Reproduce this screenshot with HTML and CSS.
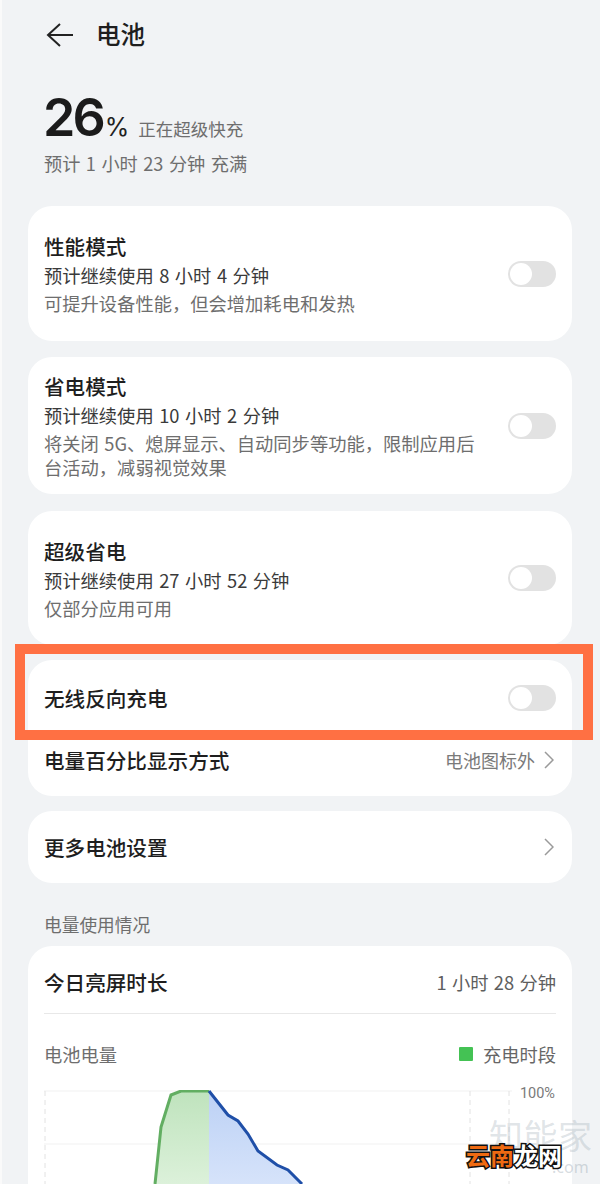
FILE: index.html
```html
<!DOCTYPE html>
<html lang="zh">
<head>
<meta charset="utf-8">
<title>电池</title>
<link rel="stylesheet" href="styles.css">
</head>
<body>
<div class="page">
  <header class="topbar">
    <svg class="back" width="28" height="26" viewBox="0 0 28 26"><path d="M14 2 L2 13 L14 24 M2 13 H27" fill="none" stroke="#222" stroke-width="2"/></svg>
    <h1 class="title">电池</h1>
  </header>
  <section class="status">
    <div class="level"><span class="num">26</span><span class="pct">%</span><span class="state">正在超级快充</span></div>
    <div class="eta">预计 1 小时 23 分钟 充满</div>
  </section>

  <div class="card card-a">
    <div class="texts"><div class="name">性能模式</div><div class="line dark">预计继续使用 8 小时 4 分钟</div><div class="line">可提升设备性能，但会增加耗电和发热</div></div>
    <span class="switch"></span>
  </div>
  <div class="card card-b">
    <div class="texts"><div class="name">省电模式</div><div class="line dark">预计继续使用 10 小时 2 分钟</div><div class="line">将关闭 5G、熄屏显示、自动同步等功能，限制应用后台活动，减弱视觉效果</div></div>
    <span class="switch"></span>
  </div>
  <div class="card card-c">
    <div class="texts"><div class="name">超级省电</div><div class="line dark">预计继续使用 27 小时 52 分钟</div><div class="line">仅部分应用可用</div></div>
    <span class="switch"></span>
  </div>
  <div class="card card-d">
    <div class="row row-wireless"><span class="name">无线反向充电</span><span class="switch"></span></div>
    <div class="row row-percent"><span class="name">电量百分比显示方式</span><span class="value">电池图标外<svg class="chev" width="10" height="18" viewBox="0 0 10 18"><path d="M1 1 L9 9 L1 17" fill="none" stroke="#9a9a9a" stroke-width="1.5"/></svg></span></div>
  </div>
  <div class="card card-e">
    <div class="row"><span class="name">更多电池设置</span><svg class="chev" width="10" height="18" viewBox="0 0 10 18"><path d="M1 1 L9 9 L1 17" fill="none" stroke="#9a9a9a" stroke-width="1.5"/></svg></div>
  </div>
  <div class="section-label">电量使用情况</div>
  <div class="card card-f">
    <div class="today"><span class="name">今日亮屏时长</span><span class="today-val">1 小时 28 分钟</span></div>
    <div class="chart-head"><span class="chart-title">电池电量</span><span class="legend"><i class="dot"></i>充电时段</span></div>
    <svg class="chart" width="544" height="100" viewBox="0 0 544 100">
      <defs>
        <linearGradient id="g" x1="0" y1="0" x2="0" y2="1"><stop offset="0" stop-color="#bfe3bd"/><stop offset="1" stop-color="#dcf1da"/></linearGradient>
        <linearGradient id="b" x1="0" y1="0" x2="0" y2="1"><stop offset="0" stop-color="#bcd1f5"/><stop offset="1" stop-color="#d6e3fa"/></linearGradient>
      </defs>
      <path d="M16 1 H484 M16 54 H484" stroke="#f1f1f1" stroke-width="1"/>
      <path d="M17 1 V100 M442 1 V100 M481 1 V100" stroke="#e2e2e2" stroke-width="1" stroke-dasharray="5 4"/>
      <path d="M127 94 L133 37 L143 5 L153 1 H181 V94 Z" fill="url(#g)"/>
      <path d="M181 1 L200 25 L210 31 L220 44 L230 61 L249 75 L260 80 L274 94 H181 Z" fill="url(#b)"/>
      <path d="M127 94 L133 37 L143 5 L153 1 H181" fill="none" stroke="#62ae62" stroke-width="3"/>
      <path d="M181 1 L200 25 L210 31 L220 44 L230 61 L249 75 L260 80 L274 94" fill="none" stroke="#1f4fa8" stroke-width="3"/>
    </svg>
    <span class="tick">100%</span>
  </div>
  <div class="frame"></div>
  <div class="mark">知能家</div>
  <div class="mark-com">.com</div>
  <div class="stamp"><span class="orange">云南</span><span class="white">龙网</span></div>
</div>
</body>
</html>
```
FILE: styles.css
```css
* { box-sizing: border-box; }
html, body { margin: 0; padding: 0; }
body { width: 600px; height: 1184px; overflow: hidden; background: #f1f3f5; font-family: "Noto Sans CJK SC", "Noto Sans", sans-serif; color: #1e1e1e; }
.page { position: relative; width: 600px; height: 1184px; overflow: hidden; padding: 0 28px 0 26px; border-left: 2px solid #fafafa; }
.topbar { display: flex; align-items: center; height: 70px; padding-left: 18px; gap: 22px; }
.back { display: block; }
.title { margin: 0; font-size: 24.5px; font-weight: 500; line-height: 30px; position: relative; top: -1px; }
.status { padding: 19px 0 0 16px; height: 136px; }
.level { display: flex; align-items: baseline; height: 57px; margin-left: -1px; }
.num { font-family: Inter, "Noto Sans", sans-serif; font-size: 52px; line-height: 57px; font-weight: 600; letter-spacing: -3px; color: #1b1b1b; }
.pct { font-family: Inter, "Noto Sans", sans-serif; font-size: 25px; font-weight: 400; margin-left: 2px; color: #222; }
.state { font-size: 17.5px; color: #6e6e6e; margin-left: 9px; }
.eta { font-size: 18.2px; word-spacing: 1.4px; line-height: 26px; color: #6e6e6e; margin-top: 4px; }
.card { display: flex; align-items: center; justify-content: space-between; background: #fff; border-radius: 24px; padding: 0 16px; margin-bottom: 16px; }
.card-a { height: 135px; }
.card-b { height: 137px; margin-bottom: 17px; }
.card-c { height: 134px; margin-bottom: 15px; }
.card-d { height: 136px; flex-direction: column; align-items: stretch; justify-content: flex-start; margin-bottom: 15px; }
.card-e { height: 72px; }
.card-f { position: relative; display: block; height: 300px; padding: 0; margin: 0; }
.texts { width: 440px; }
.name { font-size: 20.6px; line-height: 28px; font-weight: 500; color: #1e1e1e; }
.line { font-size: 18.3px; word-spacing: 1.4px; line-height: 24px; color: #6e6e6e; margin-top: 4px; }
.line.dark { color: #3a3a3a; margin-top: 3px; }
.switch { position: relative; flex: none; display: block; width: 48px; height: 26px; border-radius: 13px; background: #e2e2e2; }
.switch::after { content: ""; position: absolute; left: 2px; top: 2px; width: 22px; height: 22px; border-radius: 50%; background: #fff; }
.row { display: flex; align-items: center; justify-content: space-between; width: 100%; }
.row-wireless { height: 76px; }
.row-percent { height: 48px; }
.row .chev { margin-right: 2px; }
.value { display: flex; align-items: center; gap: 9px; font-size: 18px; color: #7a7a7a; }
.value .chev { margin-right: 2px; }
.section-label { font-size: 17.7px; line-height: 24px; color: #6e6e6e; padding-left: 16px; margin-top: 29px; margin-bottom: 10px; }
.today { display: flex; align-items: center; justify-content: space-between; height: 68px; padding-top: 4px; margin: 0 16px; border-bottom: 1px solid #e8e8e8; }
.today-val { font-size: 18.3px; word-spacing: 1.2px; color: #5e5e5e; }
.chart-head { display: flex; align-items: center; justify-content: space-between; height: 30px; margin: 25px 16px 0; }
.chart-title { font-size: 18.3px; color: #6e6e6e; }
.legend { display: flex; align-items: center; gap: 10px; font-size: 18.3px; color: #666; }
.dot { display: block; width: 14px; height: 14px; background: #44c254; border-radius: 1px; }
.chart { display: block; margin-top: 21px; }
.tick { position: absolute; right: 17px; top: 139px; font-family: Roboto, "Noto Sans", sans-serif; font-size: 14.5px; line-height: 18px; color: #7a7a7a; }
.frame { position: absolute; left: 13px; top: 644px; width: 578px; height: 96px; border: 10px solid #ff7043; }
.mark { position: absolute; left: 487px; top: 1115px; font-size: 34px; line-height: 40px; letter-spacing: 0.5px; color: rgba(150,165,175,.3); white-space: nowrap; }
.mark-com { position: absolute; left: 550px; top: 1155px; font-family: "Noto Sans", sans-serif; font-size: 16px; line-height: 24px; color: rgba(150,165,175,.4); }
.stamp { position: absolute; left: 464px; top: 1137px; font-size: 24px; line-height: 36px; font-weight: 700; white-space: nowrap; }
.stamp span { -webkit-text-stroke: 3px #111; paint-order: stroke fill; }
.orange { color: #ef6a12; }
.white { color: #fff; }
```
